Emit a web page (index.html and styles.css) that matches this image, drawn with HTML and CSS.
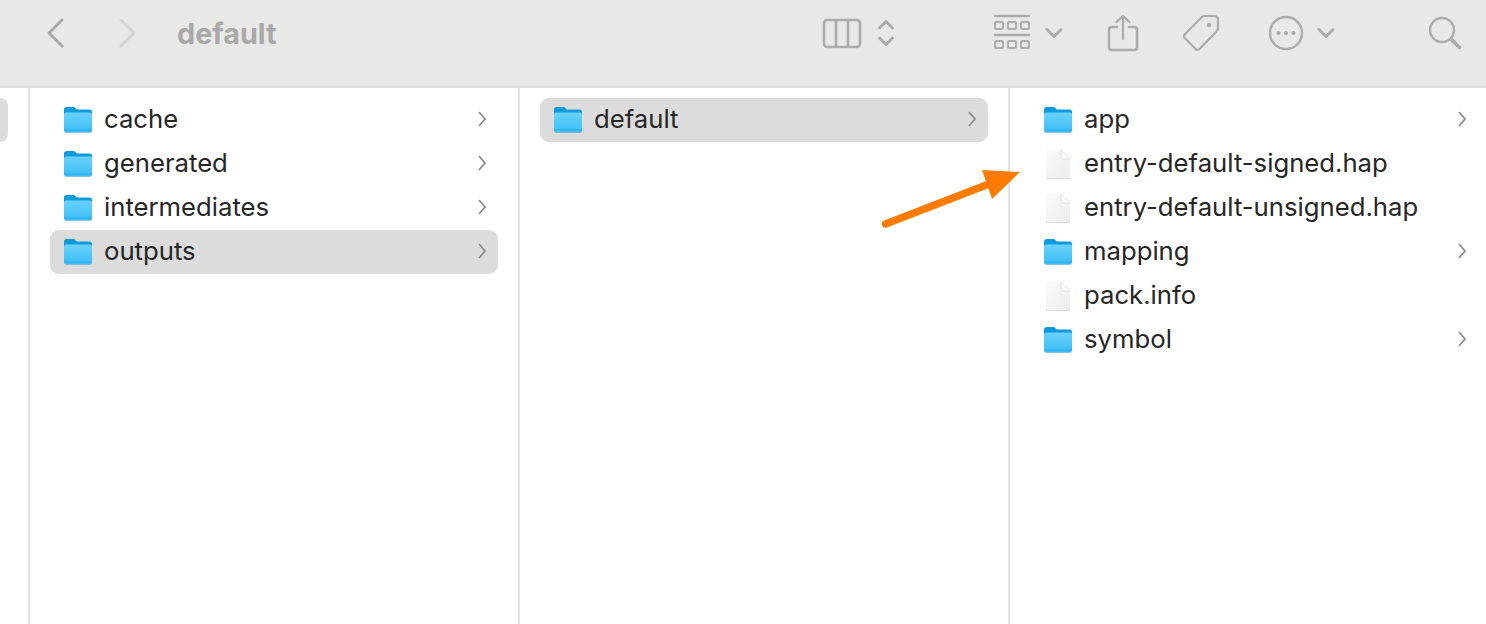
FILE: index.html
```html
<!DOCTYPE html>
<html lang="en">
<head>
    <meta charset="UTF-8">
    <meta name="viewport" content="width=device-width, initial-scale=1.0">
    <title>default</title>
    <link rel="stylesheet" href="styles.css">
</head>
<body>
    <svg class="defs" width="0" height="0">
        <defs>
            <linearGradient id="folderBody" x1="0" y1="0" x2="0" y2="1">
                <stop offset="0" stop-color="#68d2fb"/>
                <stop offset="1" stop-color="#3dbdf6"/>
            </linearGradient>
            <linearGradient id="docBody" x1="0" y1="0" x2="1" y2="1">
                <stop offset="0" stop-color="#fafafa"/>
                <stop offset="1" stop-color="#ececec"/>
            </linearGradient>
            <symbol id="folder" viewBox="0 0 30 28">
                <path d="M1 6V3.500C1 2 2 1 3.500 1H10c1.200 0 1.800.4 2.500 1.200L14 3.500h12.500C28 3.500 29 4.500 29 6v4H1z" fill="#0f9ade"/>
                <rect x="1" y="7" width="28" height="20" rx="2" fill="#9a9a9a" opacity=".55"/>
                <path d="M1 8.500C1 7.300 2 6.500 3 6.500h24c1.100 0 2 .8 2 2V24c0 1.400-1 2.400-2.400 2.400H3.400C2 26.400 1 25.400 1 24z" fill="url(#folderBody)"/>
                <rect x="1" y="23.500" width="28" height="1" fill="#1ba6ea" opacity=".7"/>
            </symbol>
            <symbol id="doc" viewBox="0 0 26 30">
                <path d="M1 3.500C1 2.500 1.500 2 2.500 2H16l9 9v17.500c0 1-.5 1.500-1.500 1.500h-21C1.500 30 1 29.500 1 28.500z" fill="#c4c4c4" opacity=".6"/>
                <path d="M1 2.500C1 1.500 1.500 1 2.500 1H16l9 9v17.500c0 1-.5 1.500-1.500 1.500h-21C1.500 29 1 28.500 1 27.500z" fill="url(#docBody)"/>
                <path d="M16 1v7.500c0 1 .5 1.500 1.500 1.500H25z" fill="#fff" stroke="#d8d8d8" stroke-width=".8" stroke-linejoin="round"/>
            </symbol>
            <symbol id="chev" viewBox="0 0 8 16">
                <path d="M1 1l6 7-6 7" fill="none" stroke="#8b8b8b" stroke-width="1.800"/>
            </symbol>
        </defs>
    </svg>

    <header class="toolbar">
        <svg class="tool back" width="18" height="30" viewBox="0 0 18 30"><path d="M16 2L3 15l13 13" fill="none" stroke="#a9a9a9" stroke-width="3" stroke-linecap="round" stroke-linejoin="round"/></svg>
        <svg class="tool forward" width="18" height="30" viewBox="0 0 18 30"><path d="M2 2l13 13L2 28" fill="none" stroke="#d2d2d2" stroke-width="3" stroke-linecap="round" stroke-linejoin="round"/></svg>
        <h1 class="title">default</h1>

        <svg class="tool view" width="40" height="32" viewBox="0 0 40 32"><g fill="none" stroke="#ababab" stroke-width="2.600"><rect x="2" y="3" width="36" height="27" rx="3.500"/><path d="M14 3v27M26 3v27"/></g></svg>
        <svg class="tool updown" width="18" height="30" viewBox="0 0 18 30"><path d="M2.500 10L9 3.500 15.500 10M2.500 20L9 26.500 15.500 20" fill="none" stroke="#ababab" stroke-width="3" stroke-linecap="round" stroke-linejoin="round"/></svg>

        <svg class="tool group" width="38" height="38" viewBox="0 0 38 38"><g fill="none" stroke="#ababab"><path d="M1 2h36M1 21h36" stroke-width="2.400"/><g stroke-width="2"><rect x="2" y="8" width="8" height="7" rx="1.500"/><rect x="15" y="8" width="8" height="7" rx="1.500"/><rect x="28" y="8" width="8" height="7" rx="1.500"/><rect x="2" y="27" width="8" height="7" rx="1.500"/><rect x="15" y="27" width="8" height="7" rx="1.500"/><rect x="28" y="27" width="8" height="7" rx="1.500"/></g></g></svg>
        <svg class="tool group-caret" width="18" height="12" viewBox="0 0 18 12"><path d="M2 2.500l7 7 7-7" fill="none" stroke="#ababab" stroke-width="3" stroke-linecap="round" stroke-linejoin="round"/></svg>

        <svg class="tool share" width="32" height="38" viewBox="0 0 32 38"><g fill="none" stroke="#ababab" stroke-linecap="round" stroke-linejoin="round"><path d="M10 13H4.500C3 13 2 14 2 15.500V33.500C2 35 3 36 4.500 36H27.500C29 36 30 35 30 33.500V15.500C30 14 29 13 27.500 13H22" stroke-width="2.600"/><path d="M16 25V2M9.500 8L16 2l6.500 6" stroke-width="2.200"/></g></svg>
        <svg class="tool tag" width="38" height="38" viewBox="0 0 38 38"><path d="M23 2h9c2.500 0 4 1.500 4 4v8c0 1.500-.4 2.500-1.500 3.500L17.500 35c-1.400 1.300-2.800 1.300-4 0L2.800 24c-1.200-1.200-1.200-2.600 0-3.800L20 3c1-.7 2-1 3-1z" fill="none" stroke="#ababab" stroke-width="2.200" stroke-linejoin="round"/><circle cx="27" cy="11" r="2.300" fill="#ababab"/></svg>
        <svg class="tool more" width="36" height="36" viewBox="0 0 36 36"><circle cx="18" cy="18" r="16" fill="none" stroke="#ababab" stroke-width="2.400"/><g fill="#ababab"><circle cx="10.500" cy="18" r="2.100"/><circle cx="18" cy="18" r="2.100"/><circle cx="25.500" cy="18" r="2.100"/></g></svg>
        <svg class="tool more-caret" width="18" height="12" viewBox="0 0 18 12"><path d="M2 2.500l7 7 7-7" fill="none" stroke="#ababab" stroke-width="3" stroke-linecap="round" stroke-linejoin="round"/></svg>
        <svg class="tool search" width="34" height="34" viewBox="0 0 34 34"><g fill="none" stroke="#ababab" stroke-linecap="round"><circle cx="14" cy="14" r="12" stroke-width="2.400"/><path d="M23 23l8.500 8.500" stroke-width="3.600"/></g></svg>
    </header>

    <main class="browser">
        <section class="column stub-column">
            <div class="stub"></div>
        </section>

        <section class="column">
            <div class="row"><svg class="icon"><use href="#folder"/></svg><span class="name">cache</span><svg class="chevron"><use href="#chev"/></svg></div>
            <div class="row"><svg class="icon"><use href="#folder"/></svg><span class="name">generated</span><svg class="chevron"><use href="#chev"/></svg></div>
            <div class="row"><svg class="icon"><use href="#folder"/></svg><span class="name">intermediates</span><svg class="chevron"><use href="#chev"/></svg></div>
            <div class="row selected"><svg class="icon"><use href="#folder"/></svg><span class="name">outputs</span><svg class="chevron"><use href="#chev"/></svg></div>
        </section>

        <section class="column">
            <div class="row selected"><svg class="icon"><use href="#folder"/></svg><span class="name">default</span><svg class="chevron"><use href="#chev"/></svg></div>
        </section>

        <section class="column last">
            <div class="row"><svg class="icon"><use href="#folder"/></svg><span class="name">app</span><svg class="chevron"><use href="#chev"/></svg></div>
            <div class="row"><svg class="icon file"><use href="#doc"/></svg><span class="name">entry-default-signed.hap</span></div>
            <div class="row"><svg class="icon file"><use href="#doc"/></svg><span class="name">entry-default-unsigned.hap</span></div>
            <div class="row"><svg class="icon"><use href="#folder"/></svg><span class="name">mapping</span><svg class="chevron"><use href="#chev"/></svg></div>
            <div class="row"><svg class="icon file"><use href="#doc"/></svg><span class="name">pack.info</span></div>
            <div class="row"><svg class="icon"><use href="#folder"/></svg><span class="name">symbol</span><svg class="chevron"><use href="#chev"/></svg></div>
        </section>
    </main>

    <svg class="arrow" width="150" height="70" viewBox="870 160 150 70">
        <path d="M885.500 224L994 182" fill="none" stroke="#ff7a00" stroke-width="7.500" stroke-linecap="round"/>
        <path d="M982 170L1020 172 992 199z" fill="#ff7a00"/>
    </svg>
</body>
</html>
```

FILE: styles.css
```css
html, body {
    height: 100%;
}

body {
    margin: 0;
    overflow: hidden;
    background-color: #ffffff;
    font-family: Inter, "Noto Sans", sans-serif;
    color: #262626;
    position: relative;
}

.defs {
    display: block;
    height: 0;
}

.toolbar {
    height: 86px;
    box-sizing: border-box;
    padding-left: 46px;
    display: flex;
    align-items: center;
    background-color: #e8e8e7;
}

.tool {
    flex: none;
    display: block;
    margin-top: -20px;
}

.forward { margin-left: 55px; }
.updown { margin-left: 15px; }
.group { margin-left: 98px; }
.group-caret { margin-left: 14px; }
.share { margin-left: 44px; }
.tag { margin-left: 43px; }
.more { margin-left: 48px; }
.more-caret { margin-left: 13px; }
.search { margin-left: 93px; }

.title {
    width: 645px;
    margin: -20px 0 0 40px;
    font-size: 28.8px;
    font-weight: 700;
    color: #a9a9a9;
    flex: none;
}

.browser {
    display: grid;
    grid-template-columns: 30px 490px 490px 476px;
    height: 538px;
    border-top: 2px solid #dedede;
    box-sizing: border-box;
}

.column {
    box-sizing: border-box;
    border-right: 2px solid #e2e2e2;
    padding: 10px 20px 0;
    overflow: hidden;
}

.column.last {
    border-right: 0;
    padding-right: 8px;
}

.stub-column {
    padding: 10px 0 0;
}

.stub {
    width: 8px;
    height: 44px;
    background-color: #dcdcdc;
    border-radius: 0 9px 9px 0;
}

.row {
    height: 44px;
    display: flex;
    align-items: center;
    padding: 0 12px 0 13px;
    border-radius: 9px;
}

.row.selected {
    background-color: #dcdcdc;
}

.icon {
    width: 30px;
    height: 28px;
    flex: none;
}

.icon.file {
    width: 26px;
    height: 30px;
    margin: 0 2px;
}

.name {
    margin-left: 11px;
    font-size: 25.7px;
    line-height: 30px;
    white-space: nowrap;
    flex: 1;
    margin-top: -2px;
}

.chevron {
    width: 8px;
    height: 16px;
    flex: none;
    margin-top: -2px;
}

.arrow {
    position: absolute;
    left: 870px;
    top: 160px;
}
```
